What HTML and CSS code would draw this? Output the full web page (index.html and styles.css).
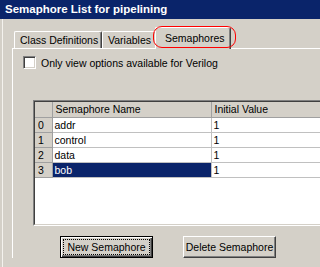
FILE: index.html
```html
<!DOCTYPE html>
<html>
<head>
<meta charset="utf-8">
<link rel="stylesheet" href="styles.css">
</head>
<body>
<div class="window">
  <div class="titlebar">Semaphore List for pipelining</div>
  <div class="client">
    <div class="tabs">
      <div class="tab tab-class">Class Definitions</div>
      <div class="tab tab-vars">Variables</div>
      <div class="tab tab-sem active">Semaphores</div>
    </div>
    <div class="panel">
      <div class="check"><span class="box"></span><span>Only view options available for Verilog</span></div>
      <div class="grid">
        <div class="grid-inner">
          <table class="table">
            <colgroup><col class="c-num"><col class="c-name"><col class="c-val"></colgroup>
            <thead>
              <tr><th class="corner"></th><th>Semaphore Name</th><th>Initial Value</th></tr>
            </thead>
            <tbody>
              <tr><th class="rownum">0</th><td>addr</td><td>1</td></tr>
              <tr><th class="rownum">1</th><td>control</td><td>1</td></tr>
              <tr><th class="rownum">2</th><td>data</td><td>1</td></tr>
              <tr><th class="rownum">3</th><td class="selected">bob</td><td>1</td></tr>
            </tbody>
          </table>
        </div>
      </div>
      <div class="buttons">
        <div class="btn default"><span class="focus">New Semaphore</span></div>
        <div class="btn">Delete Semaphore</div>
      </div>
    </div>
    <div class="annot"></div>
  </div>
</div>
</body>
</html>
```
FILE: styles.css
```css
html, body {
  margin: 0;
  padding: 0;
  background: #d4d0c8;
  overflow: hidden;
}
body {
  font-family: "Liberation Sans", Arial, sans-serif;
  font-size: 10.5px;
  color: #000;
}
.window {
  position: relative;
  width: 100%;
  min-width: 293px;
  height: 267px;
  overflow: hidden;
}
.titlebar {
  height: 19px;
  line-height: 19px;
  background: #0a246a;
  color: #fff;
  font-family: "Liberation Sans", Arial, sans-serif;
  font-weight: bold;
  font-size: 11.5px;
  padding-left: 5px;
  white-space: nowrap;
}
.client {
  margin-left: 2px;
  border-left: 1px solid #f4f2ee;
  padding-top: 8px;
  padding-left: 9px;
  height: 240px;
}
.tabs {
  display: flex;
  align-items: flex-end;
  height: 21px;
  padding-left: 2px;
  position: relative;
  z-index: 1;
}
.tab {
  box-sizing: border-box;
  height: 17px;
  border-top: 1px solid #fff;
  border-left: 1px solid #fff;
  border-right: 1px solid #404040;
  box-shadow: inset -1px 0 #808080;
  border-top-left-radius: 2px;
  border-top-right-radius: 2px;
  padding: 2px 0 0 5px;
  white-space: nowrap;
  background: #d4d0c8;
}
.tab-class { width: 88px; }
.tab-vars { width: 55px; }
.tab.active {
  height: 22px;
  margin-bottom: -1px;
  margin-left: -2px;
  width: 76px;
  padding: 4px 0 0 9px;
}
.panel {
  border-top: 1px solid #fff;
  border-left: 1px solid #fff;
  padding: 7px 0 0 10px;
}
.check {
  display: flex;
  align-items: center;
  height: 13px;
  gap: 5px;
  white-space: nowrap;
}
.box {
  box-sizing: border-box;
  width: 13px;
  height: 13px;
  background: #fff;
  border: 1px solid;
  border-color: #808080 #fff #fff #808080;
  box-shadow: inset 1px 1px #404040, inset -1px -1px #d4d0c8;
}
.grid {
  margin: 31px -40px 0 10px;
  height: 126px;
  box-sizing: border-box;
  border: 1px solid;
  border-color: #808080 #fff #fff #808080;
}
.grid-inner {
  box-sizing: border-box;
  height: 100%;
  border: 1px solid;
  border-color: #404040 #d4d0c8 #d4d0c8 #404040;
  background: #fff;
  overflow: hidden;
}
.table {
  border-collapse: collapse;
  table-layout: fixed;
  width: 100%;
}
.c-num { width: 17px; }
.c-name { width: 159px; }
.table th, .table td {
  height: 14px;
  padding: 0 0 0 2px;
  text-align: left;
  font-weight: normal;
  white-space: nowrap;
  border: 1px solid #c0c0c0;
  line-height: 13px;
}
.table thead th {
  background: #d4d0c8;
  height: 15px;
  padding-left: 3px;
  border-color: #a0a0a0;
  border-top: none;
}
.table thead th:first-child,
.table tbody th { border-left: none; }
.table tbody th.rownum {
  background: #d4d0c8;
  border-color: #a0a0a0;
  padding-left: 3px;
}
.table td.selected {
  background: #0a246a;
  color: #fff;
}
.buttons {
  display: flex;
  gap: 30px;
  margin: 10px 0 0 37px;
}
.btn {
  box-sizing: border-box;
  width: 93px;
  height: 22px;
  display: flex;
  align-items: center;
  justify-content: center;
  border: 1px solid;
  border-color: #fff #404040 #404040 #fff;
  box-shadow: inset -1px -1px #808080;
  white-space: nowrap;
}
.btn.default {
  border: 1px solid #000;
  box-shadow: inset 1px 1px #fff, inset -1px -1px #404040, inset -2px -2px #808080;
}
.focus {
  border: 1px dotted #000;
  padding: 1px 3px;
}
.annot {
  position: absolute;
  left: 153px;
  top: 26px;
  width: 81px;
  height: 20px;
  border: 1px solid #f00;
  border-radius: 9px;
  z-index: 2;
  pointer-events: none;
}
```
